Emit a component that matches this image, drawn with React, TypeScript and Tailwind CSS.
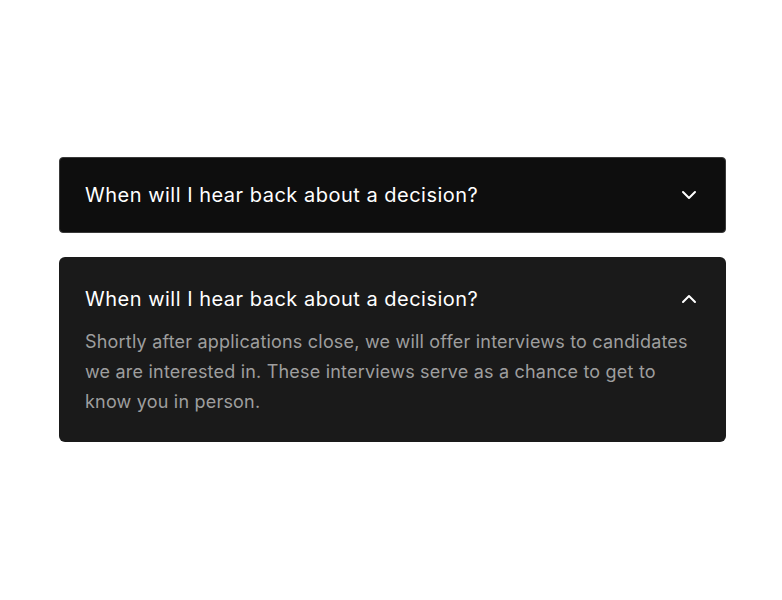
import { ChevronDown, ChevronUp } from "lucide-react";

const question = "When will I hear back about a decision?";
const answer =
  "Shortly after applications close, we will offer interviews to candidates we are interested in. These interviews serve as a chance to get to know you in person.";

export default function App() {
  return (
    <main className="min-h-screen bg-white font-['Inter',sans-serif]">
      <div className="ml-[59px] flex w-[667px] flex-col gap-6 pt-[157px]">
        {/* collapsed */}
        <button className="flex items-center justify-between rounded-[4px] border border-[#3a3a3a] bg-[#0e0e0e] py-[23px] pl-[25px] pr-[24px] text-left">
          <span className="text-[20px] leading-7 tracking-[0.5px] text-white">{question}</span>
          <ChevronDown className="h-6 w-6 text-white" strokeWidth={2} />
        </button>

        {/* expanded */}
        <div className="rounded-[6px] bg-[#1a1a1a] pb-[25px] pl-[26px] pr-[25px] pt-[28px]">
          <div className="flex items-center justify-between">
            <span className="text-[20px] leading-7 tracking-[0.5px] text-white">{question}</span>
            <ChevronUp className="h-6 w-6 text-white" strokeWidth={2} />
          </div>
          <p className="mt-[14px] text-[18px] leading-[30px] tracking-[0.2px] text-[#9e9e9e]">{answer}</p>
        </div>
      </div>
    </main>
  );
}
